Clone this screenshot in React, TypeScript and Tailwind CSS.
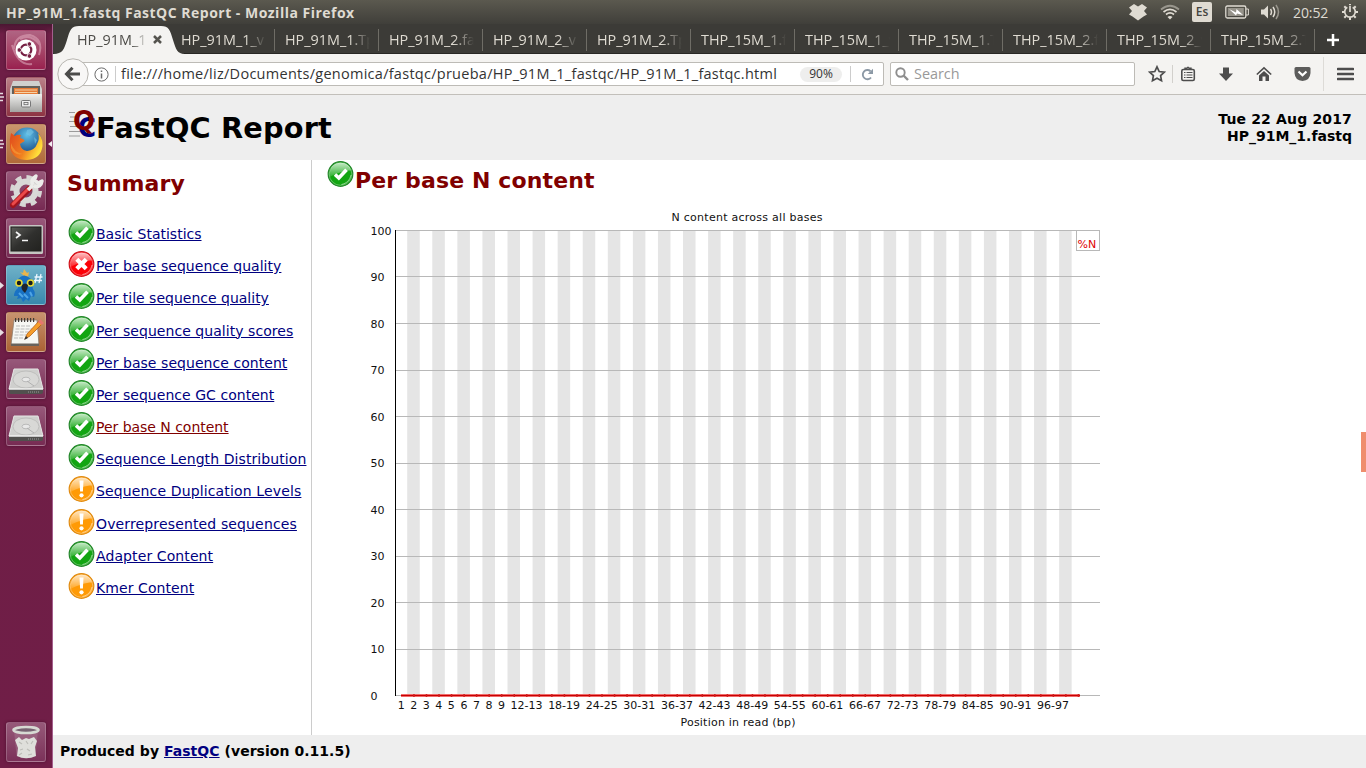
import React from "react";

type Status = "pass" | "fail" | "warn";

const UBUNTU = "font-['Open_Sans','Noto_Sans',sans-serif]";

const summary: { label: string; status: Status; tracking: string; current?: boolean }[] = [
  { label: "Basic Statistics", status: "pass", tracking: "tracking-[0px]" },
  { label: "Per base sequence quality", status: "fail", tracking: "tracking-[0.04px]" },
  { label: "Per tile sequence quality", status: "pass", tracking: "tracking-[0px]" },
  { label: "Per sequence quality scores", status: "pass", tracking: "tracking-[0.05px]" },
  { label: "Per base sequence content", status: "pass", tracking: "tracking-[0.05px]" },
  { label: "Per sequence GC content", status: "pass", tracking: "tracking-[0.04px]" },
  { label: "Per base N content", status: "pass", tracking: "tracking-[-0.03px]", current: true },
  { label: "Sequence Length Distribution", status: "pass", tracking: "tracking-[0.09px]" },
  { label: "Sequence Duplication Levels", status: "warn", tracking: "tracking-[0.14px]" },
  { label: "Overrepresented sequences", status: "warn", tracking: "tracking-[0.14px]" },
  { label: "Adapter Content", status: "pass", tracking: "tracking-[0.1px]" },
  { label: "Kmer Content", status: "warn", tracking: "tracking-[0.08px]" },
];

const tabs = [
  "HP_91M_1_v",
  "HP_91M_1.Tp",
  "HP_91M_2.fa",
  "HP_91M_2_v",
  "HP_91M_2.Tp",
  "THP_15M_1.f",
  "THP_15M_1_v",
  "THP_15M_1.T",
  "THP_15M_2.f",
  "THP_15M_2_v",
  "THP_15M_2.T",
];

function Gradients() {
  return (
    <svg width="0" height="0" className="absolute">
      <defs>
        <linearGradient id="gloss" x1="0" y1="0" x2="0" y2="1">
          <stop offset="0" stopColor="#fff" stopOpacity=".75" />
          <stop offset="1" stopColor="#fff" stopOpacity=".12" />
        </linearGradient>
        <linearGradient id="metal" x1="0" y1="0" x2="0" y2="1">
          <stop offset="0" stopColor="#f0f0ee" />
          <stop offset="1" stopColor="#a3a3a1" />
        </linearGradient>
        <linearGradient id="fox" x1="0" y1="0" x2="1" y2="0.4">
          <stop offset="0" stopColor="#e0481c" />
          <stop offset=".6" stopColor="#f08020" />
          <stop offset="1" stopColor="#ffdf3a" />
        </linearGradient>
        <radialGradient id="globe" cx=".5" cy=".25" r=".7">
          <stop offset="0" stopColor="#5fc0e8" />
          <stop offset="1" stopColor="#123e7c" />
        </radialGradient>
        <linearGradient id="term" x1="0" y1="0" x2="1" y2="1">
          <stop offset="0" stopColor="#5c5c58" />
          <stop offset=".5" stopColor="#30302e" />
          <stop offset="1" stopColor="#22221f" />
        </linearGradient>
      </defs>
    </svg>
  );
}

function StatusIcon({ status }: { status: Status }) {
  const fill = status === "pass" ? "#12a512" : status === "fail" ? "#fb0007" : "#ff9a05";
  const edge = status === "pass" ? "#23852a" : status === "fail" ? "#d01018" : "#e08a10";
  return (
    <svg viewBox="-0.5 0 26 26" className="h-[26px] w-[26px] shrink-0 overflow-visible">
      <circle cx="13" cy="13" r="12.3" fill={fill} stroke={edge} strokeWidth="1.2" />
      <circle cx="13" cy="13" r="11.3" fill="none" stroke="#fff" strokeOpacity=".45" strokeWidth=".7" />
      <path d="M2 13.500 C2 6 7 1.800 13 1.800 S22.500 5 23.500 9.500 C17 9.500 10 12 2 16 Z" fill="url(#gloss)" />
      <path d="M14 23.500 C19 22.500 22.500 19 23.500 14" stroke="#fff" strokeOpacity=".5" strokeWidth="1" fill="none" />
      {status === "pass" && <path d="M7.500 13.500 L11.300 17 L19 8.700" fill="none" stroke="#fff" strokeWidth="3.600" />}
      {status === "fail" && <path d="M8.300 8.300 L17.700 17.700 M17.700 8.300 L8.300 17.700" fill="none" stroke="#fff" strokeWidth="4.200" />}
      {status === "warn" && (
        <>
          <path d="M11 4.500 H15 L14.400 15.500 H11.600 Z" fill="#fff" />
          <circle cx="13" cy="19.300" r="2.100" fill="#fff" />
        </>
      )}
    </svg>
  );
}

function TopBar() {
  return (
    <div className={`flex h-6 shrink-0 items-center bg-linear-to-b from-[#5b594f] to-[#403f3a] text-[#dfdbd2] ${UBUNTU}`}>
      <span className="ml-1.5 whitespace-nowrap text-[14px] font-bold tracking-[0.49px]">HP_91M_1.fastq FastQC Report - Mozilla Firefox</span>
      <div className="ml-auto flex h-full items-center">
        <svg width="20" height="18" viewBox="0 0 20 18" className="mr-[12px]">
          <path fill="#dfdbd2" d="M6 1 L10 3.500 L14 1 L19 4.500 L16 8 L19 11.500 L15.500 13.500 L10 17.500 L4.500 13.500 L1 11.500 L4 8 L1 4.500 Z" />
        </svg>
        <svg width="20" height="18" viewBox="0 0 20 18" className="mr-[12px]" fill="none" strokeWidth="1.700">
          <path stroke="#99968d" d="M1 6.500 Q10 -1 19 6.500" />
          <path stroke="#dfdbd2" d="M3.500 9 Q10 3.700 16.500 9 M6 11.500 Q10 8.300 14 11.500" />
          <path fill="#dfdbd2" d="M7.500 14 Q10 12 12.500 14 L10 16.500 Z" />
        </svg>
        <span className="mr-[13px] flex h-5 w-5 items-center justify-center rounded-[2px] bg-[#dfdbd2] text-[12px] font-semibold text-[#45443e]">Es</span>
        <svg width="24" height="14" viewBox="0 0 24 14" className="mr-[11px]">
          <rect x=".8" y="1" width="20" height="12" rx="1.500" fill="none" stroke="#dfdbd2" strokeWidth="1.300" />
          <rect x="2.800" y="3" width="16" height="8" fill="#96938a" />
          <path d="M21 4 h2.400 v6 H21" fill="none" stroke="#dfdbd2" />
          <path d="M4 4 L11 7.500 L11.500 4 L18 10 L12 8.500 L11 10.500 Z" fill="#fff" />
        </svg>
        <svg width="21" height="18" viewBox="0 0 21 18" className="mr-[12px]" fill="none" strokeWidth="1.500">
          <path fill="#dfdbd2" d="M1 6.500 h3 L8 2.500 v13 L4 11.500 H1 Z" />
          <path stroke="#dfdbd2" d="M10.500 6 Q12.500 9 10.500 12 M13 4 Q16.500 9 13 14" />
          <path stroke="#99968d" d="M16 2 Q21 9 16 16" />
        </svg>
        <span className="w-[36px] whitespace-nowrap text-[14px] tracking-[-0.1px]">20:52</span>
        <svg width="18" height="18" viewBox="0 0 18 18" className="ml-[12px] mr-[7px]" fill="none" stroke="#dfdbd2">
          <path strokeWidth="1.700" d="M6.300 4.300 A5.300 5.300 0 1 0 11.700 4.300" />
          <path strokeWidth="1.700" d="M9 3 V9" />
          <path strokeWidth="2" d="M3.600 9 H1 M17 9 H14.400 M5 5 L3.300 3.300 M13 5 L14.700 3.300 M5 13 L3.300 14.700 M13 13 L14.700 14.700 M9 14.500 V17 M9 1 V2.200" />
        </svg>
      </div>
    </div>
  );
}

function Tile({ bg, mark, focus, children }: { bg: string; mark?: "multi" | "one"; focus?: boolean; children: React.ReactNode }) {
  return (
    <div className="flex h-10 w-full shrink-0 items-center">
      <svg width="6" height="14" viewBox="0 0 6 14" className="shrink-0">
        {mark === "multi" && <path d="M0 3.500 h3 M0 7 h4 M0 10.500 h3" stroke="#e6dde2" strokeWidth="1.600" />}
        {mark === "one" && <path d="M0 4 L4 7.500 L0 11 Z" fill="#e6dde2" />}
      </svg>
      <div className={`h-10 w-10 overflow-hidden rounded-[3px] border border-white/20 shadow-[0_0_3px_rgba(40,0,25,0.5)] ${bg}`}>
        <svg width="38" height="38" viewBox="1 1 38 38">{children}</svg>
      </div>
      <svg width="6" height="8" viewBox="0 0 6 8" className="shrink-0">
        {focus && <path d="M6 1 L2 4 L6 7 Z" fill="#f4eef2" />}
      </svg>
    </div>
  );
}

function Drive() {
  return (
    <>
      <path d="M3 30 L37 30 V33 Q37 35 35 35 H5 Q3 35 3 33 Z" fill="#51504e" />
      <path d="M8 10 H32 L37 30 H3 Z" fill="#cfcfcd" stroke="#e6e6e6" />
      <ellipse cx="20" cy="20.500" rx="13" ry="8.500" fill="#d8d8d6" stroke="#b9b9b7" strokeWidth=".8" />
      <ellipse cx="20" cy="20.500" rx="4" ry="2.300" fill="#e8e8e8" stroke="#b0b0b0" strokeWidth=".8" />
      <path d="M21 22 L28 27" stroke="#b0b0b0" />
      <path d="M3 30 H37" stroke="#f6f6f6" />
      <path d="M22 33 H34" stroke="#999" strokeDasharray="1 1" />
    </>
  );
}

function Launcher() {
  return (
    <div className="flex w-[53px] shrink-0 flex-col border-r border-[#a45f8d] bg-linear-to-b from-[#4b1632] via-[#6e1e46] via-[10px] to-[#701e47] pb-[6px] pt-[6px]">
      <div className="flex flex-col gap-[7px]">
        <Tile bg="bg-linear-to-b from-[#b06483] to-[#99204f]">
          <path d="M8 19 Q9 5 24 5 Q38 9 33 25 M6 15 Q12 36 26 34 M14 9 Q25 3 34 15" stroke="#dca4b8" strokeWidth="2" fill="none" opacity=".6" />
          <circle cx="20" cy="20" r="10.500" fill="#fff" />
          <circle cx="20" cy="20" r="5.300" fill="none" stroke="#762044" strokeWidth="2.200" />
          <g fill="#762044" stroke="#fff" strokeWidth=".9"><circle cx="13.300" cy="20" r="2.300" /><circle cx="23.400" cy="14" r="2.300" /><circle cx="23.400" cy="26" r="2.300" /></g>
        </Tile>
        <Tile bg="bg-linear-to-b from-[#b98088] to-[#8d3343]" mark="multi">
          <path d="M7 4 H33 L36 12 V35 H4 V12 Z" fill="#d0d0ce" />
          <rect x="6" y="9" width="28" height="8" fill="#63605b" />
          <path d="M8 11 H32 V17 H8 Z" fill="#e67b36" /><path d="M9 13 H31 M9 15.500 H31" stroke="#f5d2a4" strokeWidth="1" />
          <rect x="4" y="17" width="32" height="18" rx="1" fill="url(#metal)" />
          <rect x="15.500" y="23.500" width="9" height="6.500" rx="1" fill="#eee" stroke="#777" />
          <rect x="18" y="25.500" width="4" height="2.200" fill="none" stroke="#666" strokeWidth=".8" />
        </Tile>
        <Tile bg="bg-linear-to-b from-[#c9956d] to-[#b06a38]" mark="multi" focus>
          <circle cx="21" cy="18.500" r="15" fill="url(#globe)" />
          <path d="M21 6 L25 5 L28 8 L24 12 L20 10 Z M28 13 L31 16 L29 20 Z" fill="#78c6e8" opacity=".6" />
          <path d="M5 9 L9 12 Q11 10 15 11 L14 14 L17 15 Q20 17 17 18 L14 20 Q15 26 21 27 Q29 26 31 20 Q34 15 32 9 Q37 14 36.500 22 Q35 35 21 36 Q7 36 4 24 Q3 16 5 9 Z" fill="url(#fox)" />
          <path d="M5 19 Q8 29 17 30 Q8 32 5 24 Z" fill="#f6a13b" opacity=".6" />
        </Tile>
        <Tile bg="bg-linear-to-b from-[#98587a] to-[#762952]">
          <circle cx="20" cy="20" r="14" fill="none" stroke="#d6d6d4" strokeWidth="4" strokeDasharray="6 5" />
          <circle cx="20" cy="20" r="9.500" fill="none" stroke="#d9d9d7" strokeWidth="6" />
          <path d="M7 34 L23 18" stroke="#a2141c" strokeWidth="6" strokeLinecap="round" />
          <path d="M7 33 L22 18" stroke="#ec4a4a" strokeWidth="3" strokeLinecap="round" />
          <path d="M22 19 L27 14 M27 14 Q24 9 30 5 L28.500 9 L32 12 L36 10 Q35 17 28 15" fill="none" stroke="#ececea" strokeWidth="3.500" strokeLinejoin="round" />
        </Tile>
        <Tile bg="bg-linear-to-b from-[#98587a] to-[#762952]">
          <rect x="3" y="7" width="34" height="29" rx="1.500" fill="#c5c5c2" />
          <rect x="5" y="9" width="30" height="24" fill="url(#term)" stroke="#1e1e1c" />
          <path d="M10 14 L14 17 L10 20" fill="none" stroke="#f5f5f5" strokeWidth="1.700" /><path d="M16 22.500 H22" stroke="#f5f5f5" strokeWidth="1.700" />
        </Tile>
        <Tile bg="bg-linear-to-b from-[#6eb1c8] to-[#3888ac]" mark="one">
          <path d="M18 11 L14 7 L17 8 L18 4 L21 8 L23 7 L22 12 Z" fill="#eab54c" />
          <path d="M12 14 Q18 7 25 14 L27 24 Q30 27 28 32 L25 31 L23 36 L20 34 L17 37 L15 33 L11 34 L12 31 L8 31 Q8 26 12 23 Z" fill="#1972c4" />
          <path d="M13 28 L17 32 M18 29 L22 33 M24 27 L26 31" stroke="#4fa5e5" strokeWidth="2" />
          <circle cx="13" cy="18" r="3" fill="#131b22" stroke="#e6d936" strokeWidth="1.600" /><circle cx="24.500" cy="18" r="3" fill="#131b22" stroke="#e6d936" strokeWidth="1.600" />
          <path d="M16 20 Q19 17 22 20 Q22 24 19 28 Q14 24 16 20" fill="#20252d" />
          <path d="M31 9 L29 18 M35 9 L33 18 M28.500 12 H36.500 M28 15.500 H36" stroke="#e9f6ff" strokeWidth="1.300" />
        </Tile>
        <Tile bg="bg-linear-to-b from-[#c7936f] to-[#ab6334]" mark="one">
          <path d="M8 8 H31 L33 33 H5 Z" fill="#f6f6f3" stroke="#8c7c6e" strokeWidth=".8" />
          <path d="M5 31.500 H33 V34 H5 Z" fill="#68625c" />
          <path d="M9 8 H30" stroke="#413b37" strokeWidth="4" strokeDasharray="1.200 1.800" />
          <path d="M10 14 H25 M9.500 17 H27 M9 20 H24 M8.500 23 H20 M8 26 H18" stroke="#bbb" strokeDasharray="4 1" />
          <path d="M19 27 L21 22 L33 9 L36 12 L24 24 Z" fill="#f59d2b" stroke="#b65e13" strokeWidth=".8" />
          <path d="M32 10 L34.500 7.500 L38 11 L35.500 13 Z" fill="#e7766e" /><path d="M18 28 L20 24 L22 26 Z" fill="#333" />
        </Tile>
        <Tile bg="bg-linear-to-b from-[#97587a] to-[#772b53]"><Drive /></Tile>
        <Tile bg="bg-linear-to-b from-[#97587a] to-[#772b53]"><Drive /></Tile>
      </div>
      <div className="mt-auto">
        <Tile bg="bg-linear-to-b from-[#965979] to-[#7b3159]">
          <path d="M8 8 H32 L29.500 34 Q20 39 10.500 34 Z" fill="#cdb8c4" opacity=".2" />
          <path d="M9 18 L13 15 L16 18 L20 16 L23 17 L28 15 L31 19 L29 25 L30 34 Q20 38.500 11 34 L12 26 Z" fill="#dfdfdb" />
          <path d="M13 20 L16 22 M20 19 L22 22 M27 19 L25 22 M14 28 L17 27 M21 27 L24 29 M13 33 L16 31 M22 33 L26 32" fill="none" stroke="#bdbdb8" strokeWidth="1.200" />
          <ellipse cx="20" cy="8" rx="12.500" ry="3" fill="#776171" stroke="#d7d9d3" strokeWidth="2.600" />
        </Tile>
      </div>
    </div>
  );
}

function TabStrip() {
  return (
    <div className={`flex h-[30px] shrink-0 bg-[#3c3b37] text-[14.400px] text-[#dfdbd2] shadow-[inset_0_-1px_0_#282724] ${UBUNTU}`}>
      <div className="relative h-[30px] w-[128px] shrink-0">
        <svg width="132" height="30" viewBox="0 0 132 30" className="absolute left-0 top-0">
          <path fill="#f4f3f1" d="M0 30 C10 30 11 25 14 16 C17 6 18 2 26 2 H108 C116 2 117 6 120 16 C123 25 124 30 132 30 Z" />
        </svg>
        <div className="relative flex h-full items-center pl-6 pt-px text-[#4c4b47]">
          <span className="w-[71px] overflow-hidden whitespace-nowrap [mask-image:linear-gradient(to_right,#000_78%,transparent_100%)]">HP_91M_1</span>
          <svg width="9" height="9" viewBox="0 0 9 9" className="ml-[5px]"><path d="M1 1 L8 8 M8 1 L1 8" stroke="#55544f" strokeWidth="2.500" /></svg>
        </div>
      </div>
      {tabs.map((t, i) => (
        <div key={i} className={`flex h-[30px] shrink-0 items-center pt-px ${i === 0 ? "w-[94px]" : "w-[104px] pl-[10px]"}`}>
          <span className="w-[85px] overflow-hidden whitespace-nowrap [mask-image:linear-gradient(to_right,#000_76%,transparent_100%)]">{t}</span>
          <span className="ml-auto h-[22px] w-px bg-[#6f6d66]" />
        </div>
      ))}
      <svg width="14" height="14" viewBox="0 0 14 14" className="ml-[11px] mt-[9px]"><path d="M7 1 V13 M1 7 H13" stroke="#fff" strokeWidth="2.500" /></svg>
    </div>
  );
}

function Toolbar() {
  return (
    <div className={`flex h-[41px] shrink-0 items-center border-b border-[#c2bfba] bg-[#f4f3f1] pl-1 ${UBUNTU}`}>
      <svg width="32" height="32" viewBox="0 0 32 32" className="relative z-10 shrink-0">
        <circle cx="16" cy="16" r="15.200" fill="#f8f7f6" stroke="#b7b5b0" />
        <path d="M23 16 H10 M15.500 9.800 L9.500 16 L15.500 22.200" fill="none" stroke="#4b4b4a" strokeWidth="3" />
      </svg>
      <div className="-ml-2 flex h-6 w-[803px] shrink-0 items-center rounded-r-[2px] border border-[#bdbbb6] bg-white pl-[12px]">
        <svg width="15" height="15" viewBox="0 0 15 15" className="shrink-0">
          <circle cx="7.500" cy="7.500" r="6.600" fill="none" stroke="#6b6b6b" /><path d="M7.500 3.500 v1.600 M7.500 6.500 v5" stroke="#6b6b6b" strokeWidth="1.500" />
        </svg>
        <span className="ml-[6px] h-4 w-px bg-[#ccc]" />
        <span className="ml-[5px] w-[660px] overflow-hidden whitespace-nowrap text-[14.500px] tracking-[0.27px] text-[#333]">file:///home/liz/Documents/genomica/fastqc/prueba/HP_91M_1_fastqc/HP_91M_1_fastqc.html</span>
        <span className="ml-[19px] flex h-[15px] w-[42px] items-center justify-center rounded-full bg-[#eeeeed] text-[12px] text-[#333]">90%</span>
        <span className="ml-[8px] h-4 w-px bg-[#ccc]" />
        <svg width="13" height="13" viewBox="0 0 13 13" className="ml-[10px] shrink-0"><path d="M10 9.500 A4.600 4.600 0 1 1 9.500 3.200" fill="none" stroke="#8c99a6" strokeWidth="1.900" /><path d="M12 .8 V6 H6.800 Z" fill="#8c99a6" /></svg>
      </div>
      <div className="ml-[6px] flex h-6 w-[245px] shrink-0 items-center rounded-[2px] border border-[#bdbbb6] bg-white pl-1">
        <svg width="14" height="14" viewBox="0 0 14 14"><circle cx="5.500" cy="5.500" r="4.200" fill="none" stroke="#8e8e8e" strokeWidth="1.900" /><path d="M8.500 8.500 L13 13" stroke="#8e8e8e" strokeWidth="2.400" /></svg>
        <span className="ml-[5px] text-[14.400px] tracking-[0px] text-[#999]">Search</span>
      </div>
      <svg width="18" height="18" viewBox="0 0 18 18" className="ml-[13px]"><path d="M9 1.800 L11.200 6.500 L16.300 7.100 L12.600 10.600 L13.500 15.700 L9 13.200 L4.500 15.700 L5.400 10.600 L1.700 7.100 L6.800 6.500 Z" fill="none" stroke="#4d4d4d" strokeWidth="1.700" /></svg>
      <span className="ml-[6px] h-[18px] w-px bg-[#d2d0cc]" />
      <svg width="16" height="16" viewBox="0 0 16 16" className="ml-[7px]" fill="none" stroke="#4d4d4d"><rect x="1.800" y="3.500" width="12.500" height="11" rx="1.500" strokeWidth="1.600" /><path d="M5 3.500 V2.200 H7 Q8 0 9 2.200 H11 V3.500" strokeWidth="1.400" /><path d="M4 6.500 h1.500 M4 9 h1.500 M4 11.500 h1.500 M6.500 6.500 h6 M6.500 9 h6 M6.500 11.500 h6" strokeWidth="1.100" /></svg>
      <svg width="16" height="16" viewBox="0 0 16 16" className="ml-[22px]"><path d="M5 1.500 H11 V7.500 H15 L8 15 L1 7.500 H5 Z" fill="#4d4d4d" /></svg>
      <svg width="16" height="16" viewBox="0 0 16 16" className="ml-[22px]"><path d="M.8 8.500 L8 1.800 L15.200 8.500" fill="none" stroke="#4d4d4d" strokeWidth="1.600" /><path d="M3 9.500 L8 5 L13 9.500 V15 H9.500 V10.500 H6.500 V15 H3 Z" fill="#4d4d4d" /></svg>
      <svg width="17" height="16" viewBox="0 0 17 16" className="ml-[22px]"><path d="M2 1 H15 Q16.500 1 16.500 2.500 V7 Q16 14.500 8.500 15 Q1 14.500 .5 7 V2.500 Q.5 1 2 1 Z" fill="#5c5c5b" /><path d="M4.500 5.500 L8.500 9.300 L12.500 5.500" fill="none" stroke="#fff" strokeWidth="2.200" /></svg>
      <span className="ml-[12px] h-[34px] w-px bg-[#dddbd7]" />
      <svg width="17" height="14" viewBox="0 0 17 14" className="ml-[13px]"><path d="M1 2 H16 M1 7 H16 M1 12 H16" stroke="#4d4d4d" strokeWidth="2.600" strokeLinecap="round" /></svg>
    </div>
  );
}

const CELL = 12.537;
const bands = Array.from({ length: 27 }, (_, i) => 37.200 + i * CELL * 2);
const ticks = Array.from({ length: 11 }, (_, i) => i * 10);
const xLabels = [
  ...Array.from({ length: 9 }, (_, i) => ({ x: 31.200 + i * CELL, text: String(i + 1) })),
  ...Array.from({ length: 15 }, (_, i) => ({ x: 156.500 + i * CELL * 3, text: `${12 + i * 6}-${13 + i * 6}` })),
];

function NContentChart() {
  return (
    <svg width="740" height="530" viewBox="0 0 740 530" className="ml-[42px] block font-['DejaVu_Sans',sans-serif] text-[11px]">
      {bands.map((x) => <rect key={x} x={x} y="26" width={CELL} height="465" fill="#e5e5e5" />)}
      {ticks.map((t) => {
        const y = 490.500 - t * 4.650;
        return (
          <g key={t}>
            <line x1="25" x2="730" y1={Math.floor(y) + 0.5} y2={Math.floor(y) + 0.5} stroke="#b8b8b8" />
            <text x="0.5" y={y + 4} fill="#111">{t}</text>
          </g>
        );
      })}
      <path d="M25.500 25 V491" stroke="#000" />
      <path d="M31 490.500 H710" stroke="#f06a6a" strokeWidth="3" />
      <path d="M31 490.500 H710" stroke="#c80000" strokeWidth="1" />
      {Array.from({ length: 54 }, (_, i) => <rect key={i} x={43.200 + i * CELL} y="489" width="1.500" height="3" fill="#d02020" />)}
      {xLabels.map((l) => <text key={l.text} x={l.x} y="503.500" textAnchor="middle" fill="#111">{l.text}</text>)}
      <text x="377" y="15.500" textAnchor="middle" textLength="151" fill="#111">N content across all bases</text>
      <text x="368" y="521" textAnchor="middle" textLength="115" fill="#111">Position in read (bp)</text>
      <rect x="706.500" y="25.500" width="23" height="20" fill="#fff" stroke="#b8b8b8" />
      <text x="707.500" y="42.500" fill="#e00000">%N</text>
    </svg>
  );
}

function Logo() {
  return (
    <svg width="28" height="30" viewBox="0 0 28 30" className="-mt-[5px] shrink-0 overflow-visible font-['DejaVu_Sans',sans-serif] font-bold">
      <path d="M1 2.500 H7 M2 7 H7 M1 11.500 H8 M2 16.500 H10 M1 21.500 H12 M1 26 H12" stroke="#9b9b9b" strokeWidth="1.200" />
      <text x="10" y="27.300" fontSize="26" textLength="18" lengthAdjust="spacingAndGlyphs" fill="#000080">C</text>
      <text x="5" y="19.500" fontSize="27" textLength="22" lengthAdjust="spacingAndGlyphs" fill="#800000">Q</text>
    </svg>
  );
}

function Report() {
  return (
    <div className="flex min-h-0 flex-1 flex-col bg-white font-['DejaVu_Sans',sans-serif] text-[14px] text-black">
      <header className="flex h-[65px] shrink-0 items-center justify-between bg-[#eeeeee] pl-[15px] pr-[14px]">
        <div className="flex items-center">
          <Logo />
          <span className="whitespace-nowrap text-[28.800px] font-bold leading-[34px] tracking-[0.15px]">FastQC Report</span>
        </div>
        <div className="flex flex-col items-end font-bold leading-[17px]">
          <span className="tracking-[0.16px]">Tue 22 Aug 2017</span>
          <span>HP_91M_1.fastq</span>
        </div>
      </header>
      <div className="flex min-h-0 flex-1">
        <aside className="w-[259px] shrink-0 border-r border-[#cccccc] pl-[14px]">
          <h2 className="mt-[11px] text-[22px] font-bold leading-[26px] tracking-[0.06px] text-[#800000]">Summary</h2>
          <ul className="mt-[21px]">
            {summary.map((s) => (
              <li key={s.label} className="flex h-[32.180px] items-start pl-px pt-px">
                <StatusIcon status={s.status} />
                <a className={`ml-[2px] mt-[7px] whitespace-nowrap leading-[17px] underline ${s.tracking} ${s.current ? "text-[#800000]" : "text-[#000080]"}`}>{s.label}</a>
              </li>
            ))}
          </ul>
        </aside>
        <main className="relative flex-1">
          <h2 className="flex h-[45px] items-start pl-[15px] pt-px text-[#800000]">
            <StatusIcon status="pass" />
            <span className="ml-[2px] mt-[7px] text-[22px] font-bold leading-[26px] tracking-[0.13px]">Per base N content</span>
          </h2>
          <div className="ml-[16px]"><NContentChart /></div>
          <span className="absolute right-0 top-[272px] h-10 w-[5px] bg-[#ef8d6d]" />
        </main>
      </div>
      <footer className="flex h-[33px] shrink-0 items-center bg-[#eeeeee] pl-[7px] font-bold">
        <span className="whitespace-nowrap tracking-[0.04px]">Produced by <a className="text-[#000080] underline">FastQC</a> (version 0.11.5)</span>
      </footer>
    </div>
  );
}

export default function App() {
  return (
    <div className="flex h-[768px] w-[1366px] flex-col overflow-hidden">
      <Gradients />
      <TopBar />
      <div className="flex min-h-0 flex-1">
        <Launcher />
        <div className="flex min-w-0 flex-1 flex-col">
          <TabStrip />
          <Toolbar />
          <Report />
        </div>
      </div>
    </div>
  );
}
